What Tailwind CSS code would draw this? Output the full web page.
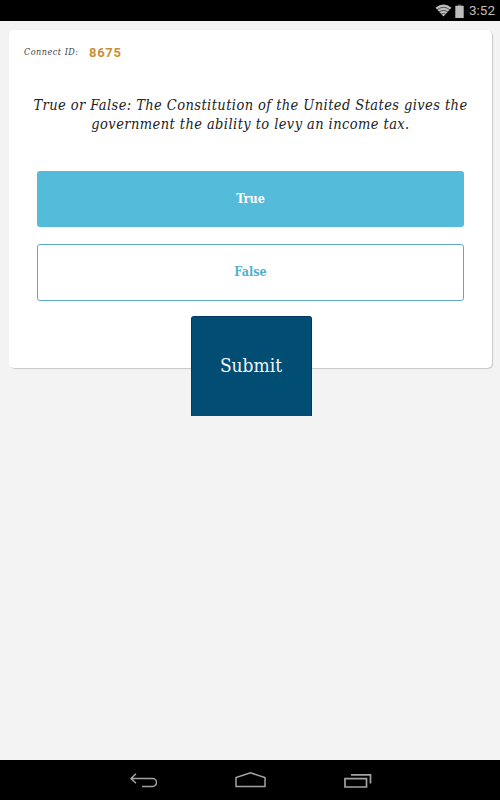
<!DOCTYPE html>
<html lang="en">
<head>
  <meta charset="UTF-8" />
  <meta name="viewport" content="width=device-width, initial-scale=1.0" />
  <title>Connect</title>
  <script src="https://cdn.jsdelivr.net/npm/@tailwindcss/browser@4"></script>
</head>
<body class="h-[800px] flex flex-col overflow-hidden bg-[#f3f3f3] font-['Roboto_Slab','DejaVu_Serif_Condensed','DejaVu_Serif',serif]">

  <!-- STATUS BAR -->
  <header class="h-[21px] shrink-0 bg-black flex items-center justify-end pr-[5px] text-[#bdbdbd]">
    <svg class="w-[17px] h-[13px]" viewBox="0 0 17 13" fill="none">
      <path d="M0.5 3.8Q8.5 -2.8 16.5 3.8L8.5 12.5Z" fill="#bdbdbd" />
      <path d="M2 5.8Q8.5 0.8 15 5.8M4 8.1Q8.5 4.7 13 8.1M6 10.2Q8.5 8.6 11 10.2" stroke="#333" stroke-width="0.8" />
    </svg>
    <svg class="w-[9px] h-[14px] ml-[3px]" viewBox="0 0 9 14" fill="#bdbdbd">
      <path d="M2.7 0.5h3.6v1.6H2.7z" fill="#555" />
      <path d="M0.3 1.8h8.4V14H0.3z" />
    </svg>
    <span class="ml-[5px] font-[Roboto,sans-serif] text-[13.5px] leading-[21px]">3:52</span>
  </header>

  <!-- QUESTION -->
  <main class="flex-1 pt-[9px] px-[9px]">
    <section class="w-[483px] h-[338px] flex flex-col items-center bg-white rounded-[5px] shadow-[1px_1px_1px_#c8c8c8]">
      <div class="self-start shrink-0 h-[46px] pl-[15px] flex items-center">
        <span class="w-[65px] italic text-[9px] tracking-[0.5px] whitespace-nowrap text-[#444]">Connect ID:</span>
        <span class="font-[Roboto,sans-serif] font-bold text-[13px] tracking-[0.7px] text-[#cb9130]">8675</span>
      </div>

      <h1 class="mt-[20px] shrink-0 text-center italic text-[14.5px] leading-[19px] tracking-[0.42px] whitespace-nowrap text-[#222]">
        True or False: The Constitution of the United States gives the<br />
        government the ability to levy an income tax.
      </h1>

      <button class="mt-[37px] w-[427px] h-[56px] shrink-0 rounded-[3px] bg-[#55bbda] text-white text-[12.5px] font-bold">True</button>
      <button class="mt-[17px] w-[427px] h-[57px] shrink-0 rounded-[3px] border border-[#5fa9c4] bg-white text-[#52b1cc] text-[12.5px] font-bold">False</button>
      <button class="mt-[15px] ml-[1px] w-[121px] h-[100px] shrink-0 rounded-t-[3px] border border-b-0 border-[#063766] bg-[#024d74] text-[#f0f7fa] text-[19px] pb-[3px]">Submit</button>
    </section>
  </main>

  <!-- NAVIGATION BAR -->
  <nav class="h-10 shrink-0 bg-black flex items-center justify-center gap-[78px]">
    <svg class="w-[28px] h-[16px]" viewBox="0 0 28 16" fill="none" stroke="#a3a3a3" stroke-width="1.5">
      <path d="M2 6.5H23.5A3.7 3.7 0 0 1 23.5 14.5H13M7 1.8L2 6.5L7 11.2" />
    </svg>
    <svg class="w-[31px] h-[16px]" viewBox="0 0 31 16" fill="none" stroke="#a3a3a3" stroke-width="1.5">
      <path d="M1 14.5V5.5L15.5 0.9L30 5.5V14.5Z" />
    </svg>
    <svg class="w-[28px] h-[16px]" viewBox="0 0 28 16" fill="none" stroke="#a3a3a3" stroke-width="1.7">
      <path d="M1 6.7H22.5V15H1ZM7 2.8H26.5V11.5" />
    </svg>
  </nav>

</body>
</html>
